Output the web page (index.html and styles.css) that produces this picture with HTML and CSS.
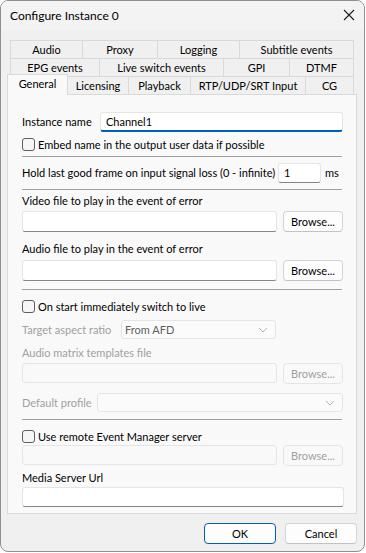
FILE: index.html
```html
<!DOCTYPE html>
<html>
<head>
<meta charset="utf-8">
<link rel="stylesheet" href="styles.css">
</head>
<body>
<div class="window">
  <div class="titlebar">
    <span class="title">Configure Instance 0</span>
    <svg class="close" width="12" height="12" viewBox="0 0 12 12"><path d="M1 1 L11 11 M11 1 L1 11" stroke="#1b1b1b" stroke-width="1.1" fill="none"/></svg>
  </div>
  <div class="content">
    <div class="tabs">
      <div class="tabrow r1">
        <div class="tab">Audio</div><div class="tab">Proxy</div><div class="tab">Logging</div><div class="tab">Subtitle events</div>
      </div>
      <div class="tabrow r2">
        <div class="tab">EPG events</div><div class="tab">Live switch events</div><div class="tab">GPI</div><div class="tab">DTMF</div>
      </div>
      <div class="tabrow r3">
        <div class="tab sel">General</div><div class="tab">Licensing</div><div class="tab">Playback</div><div class="tab">RTP/UDP/SRT Input</div><div class="tab">CG</div>
      </div>
    </div>
    <div class="panel">
      <div class="row h20">
        <span class="lbl w-instance">Instance name</span>
        <div class="edit focus grow">Channel1</div>
      </div>
      <label class="check m6"><span class="box"></span><span>Embed name in the output user data if possible</span></label>
      <div class="sep m5"></div>
      <div class="row h20 m6">
        <span class="lbl w-hold">Hold last good frame on input signal loss (0 - infinite)</span>
        <div class="edit w-num">1</div>
        <span class="lbl unit">ms</span>
      </div>
      <div class="sep m6"></div>
      <div class="lbl line m3">Video file to play in the event of error</div>
      <div class="row h21 m2">
        <div class="edit grow"></div>
        <div class="btn browse">Browse...</div>
      </div>
      <div class="lbl line m9">Audio file to play in the event of error</div>
      <div class="row h21 m3">
        <div class="edit grow"></div>
        <div class="btn browse">Browse...</div>
      </div>
      <div class="sep m8"></div>
      <label class="check m10"><span class="box"></span><span>On start immediately switch to live</span></label>
      <div class="row h19 m7">
        <span class="lbl dis w-target">Target aspect ratio</span>
        <div class="combo w-combo"><span class="val">From AFD</span><svg class="chev" width="10" height="6" viewBox="0 0 10 6"><path d="M1 1 L5 5 L9 1" stroke="#b4b4b4" stroke-width="1" fill="none"/></svg></div>
      </div>
      <div class="lbl line dis m6">Audio matrix templates file</div>
      <div class="row h20 m2">
        <div class="edit disabled grow"></div>
        <div class="btn browse disabled">Browse...</div>
      </div>
      <div class="row h19 m10">
        <span class="lbl dis w-profile">Default profile</span>
        <div class="combo grow"><span class="val"></span><svg class="chev" width="10" height="6" viewBox="0 0 10 6"><path d="M1 1 L5 5 L9 1" stroke="#b4b4b4" stroke-width="1" fill="none"/></svg></div>
      </div>
      <div class="sep m7"></div>
      <label class="check m10"><span class="box"></span><span>Use remote Event Manager server</span></label>
      <div class="row h20 m2">
        <div class="edit disabled grow"></div>
        <div class="btn browse disabled">Browse...</div>
      </div>
      <div class="lbl line m5">Media Server Url</div>
      <div class="row h20 m1">
        <div class="edit grow wide"></div>
      </div>
    </div>
    <div class="buttons">
      <div class="btn dlg default">OK</div>
      <div class="btn dlg">Cancel</div>
    </div>
  </div>
</div>
</body>
</html>
```
FILE: styles.css
```css
html, body {
  margin: 0;
  padding: 0;
  background: #ffffff;
}
body {
  font-family: Lato, "Noto Sans", sans-serif;
  font-size: 11px;
  color: #000;
}
.window {
  width: 365px;
  height: 552px;
  box-sizing: border-box;
  border: 1px solid #8f8f8f;
  border-radius: 8px;
  overflow: hidden;
  background: #f0f0f0;
  display: flex;
  flex-direction: column;
}
.titlebar {
  height: 29px;
  background: #f3f3f3;
  display: flex;
  align-items: center;
  justify-content: space-between;
  padding: 0 9px 0 9px;
  flex: none;
}
.title {
  font-size: 12px;
  color: #000;
  margin-top: -1px;
}
.close {
  margin-top: -2px;
}
.content {
  padding-top: 10px;
  display: flex;
  flex-direction: column;
}
.tabs {
  display: flex;
  flex-direction: column;
}
.tabrow {
  display: grid;
  height: 18px;
}
.r1 {
  margin-left: 9px;
  grid-template-columns: 73px 75px 82px 114px;
}
.r2 {
  margin-left: 9px;
  grid-template-columns: 90px 124px 66px 64px;
}
.r3 {
  margin-left: 6px;
  grid-template-columns: 61px 61px 62px 115px 48px;
}
.tab {
  box-sizing: border-box;
  height: 18px;
  border-top: 1px solid #d9d9d9;
  border-right: 1px solid #d9d9d9;
  background: #f0f0f0;
  text-align: center;
  line-height: 17px;
  white-space: nowrap;
}
.tab:first-child {
  border-left: 1px solid #d9d9d9;
}
.tab.sel {
  height: 21px;
  margin-top: -2px;
  background: #f9f9f9;
  border-left: 1px solid #d9d9d9;
  position: relative;
  z-index: 1;
}
.panel {
  margin: 0 7px 0 6px;
  box-sizing: border-box;
  border: 1px solid #d9d9d9;
  background: #f9f9f9;
  padding: 17px 13px 6px 14px;
  display: flex;
  flex-direction: column;
}
.row {
  display: flex;
  align-items: center;
}
.h19 { height: 19px; }
.h20 { height: 20px; }
.h21 { height: 21px; }
.m1 { margin-top: 1px; }
.m2 { margin-top: 2px; }
.m3 { margin-top: 3px; }
.m5 { margin-top: 5px; }
.m6 { margin-top: 6px; }
.m7 { margin-top: 7px; }
.m8 { margin-top: 8px; }
.m9 { margin-top: 9px; }
.m10 { margin-top: 10px; }
.lbl {
  white-space: nowrap;
  line-height: 16px;
}
.line {
  height: 16px;
}
.dis {
  color: #a0a0a0;
}
.w-instance { width: 78px; flex: none; }
.w-hold { width: 256px; flex: none; }
.w-target { width: 99px; flex: none; }
.w-profile { width: 75px; flex: none; }
.unit { margin-left: 4px; }
.grow { flex: 1; }
.edit {
  box-sizing: border-box;
  height: 100%;
  background: #ffffff;
  border: 1px solid #e5e5e5;
  border-bottom: 1px solid #868686;
  border-radius: 3px;
  padding: 0 5px;
  line-height: 18px;
  white-space: nowrap;
}
.edit.focus {
  border-bottom: 2px solid #005fb8;
  line-height: 17px;
}
.edit.w-num {
  width: 43px;
  flex: none;
}
.edit.disabled {
  background: #f9f9f9;
  border-bottom: 1px solid #e5e5e5;
}
.edit.wide {
  margin-right: -1px;
}
.btn {
  box-sizing: border-box;
  background: #fdfdfd;
  border: 1px solid #d4d4d4;
  border-bottom-color: #c2c2c2;
  border-radius: 4px;
  text-align: center;
  white-space: nowrap;
}
.browse {
  width: 60px;
  height: 21px;
  line-height: 19px;
  margin-left: 6px;
  flex: none;
}
.browse.disabled {
  color: #a0a0a0;
  background: #f9f9f9;
  border-color: #e5e5e5;
}
.combo {
  box-sizing: border-box;
  height: 100%;
  background: #fbfbfb;
  border: 1px solid #e5e5e5;
  border-radius: 3px;
  display: flex;
  align-items: center;
  justify-content: space-between;
  padding: 0 7px 0 3px;
}
.w-combo {
  width: 155px;
  flex: none;
}
.combo .val {
  color: #5f5f5f;
  line-height: 16px;
}
.chev {
  display: block;
}
.sep {
  height: 1px;
  background: #a0a0a0;
  margin-right: 1px;
}
.check {
  display: flex;
  align-items: center;
  height: 13px;
  white-space: nowrap;
}
.box {
  box-sizing: border-box;
  width: 13px;
  height: 13px;
  border: 1px solid #5d5d5d;
  border-radius: 3px;
  background: #f6f6f6;
  margin-right: 3px;
  flex: none;
}
.buttons {
  display: flex;
  justify-content: flex-end;
  gap: 9px;
  margin-top: 9px;
  padding-right: 7px;
}
.dlg {
  width: 72px;
  height: 21px;
  line-height: 19px;
}
.dlg.default {
  border: 1px solid #005fb8;
}
```
